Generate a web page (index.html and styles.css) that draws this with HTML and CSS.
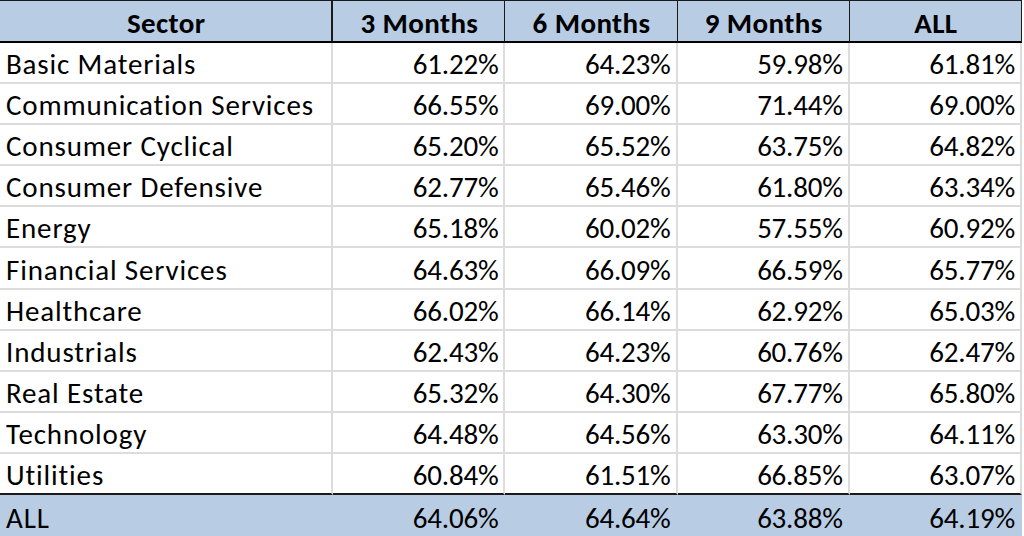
FILE: index.html
```html
<!DOCTYPE html>
<html>
<head>
<meta charset="utf-8">
<link rel="stylesheet" href="styles.css">
</head>
<body>
<table class="grid">
  <colgroup>
    <col class="c-sector"><col class="c-num"><col class="c-num"><col class="c-num"><col class="c-num">
  </colgroup>
  <thead>
    <tr class="head">
      <th>Sector</th><th>3 Months</th><th>6 Months</th><th>9 Months</th><th>ALL</th>
    </tr>
  </thead>
  <tbody>
    <tr><td>Basic Materials</td><td>61.22%</td><td>64.23%</td><td>59.98%</td><td>61.81%</td></tr>
    <tr><td>Communication Services</td><td>66.55%</td><td>69.00%</td><td>71.44%</td><td>69.00%</td></tr>
    <tr><td>Consumer Cyclical</td><td>65.20%</td><td>65.52%</td><td>63.75%</td><td>64.82%</td></tr>
    <tr><td>Consumer Defensive</td><td>62.77%</td><td>65.46%</td><td>61.80%</td><td>63.34%</td></tr>
    <tr><td>Energy</td><td>65.18%</td><td>60.02%</td><td>57.55%</td><td>60.92%</td></tr>
    <tr><td>Financial Services</td><td>64.63%</td><td>66.09%</td><td>66.59%</td><td>65.77%</td></tr>
    <tr><td>Healthcare</td><td>66.02%</td><td>66.14%</td><td>62.92%</td><td>65.03%</td></tr>
    <tr><td>Industrials</td><td>62.43%</td><td>64.23%</td><td>60.76%</td><td>62.47%</td></tr>
    <tr><td>Real Estate</td><td>65.32%</td><td>64.30%</td><td>67.77%</td><td>65.80%</td></tr>
    <tr><td>Technology</td><td>64.48%</td><td>64.56%</td><td>63.30%</td><td>64.11%</td></tr>
    <tr class="last"><td>Utilities</td><td>60.84%</td><td>61.51%</td><td>66.85%</td><td>63.07%</td></tr>
  </tbody>
  <tfoot>
    <tr class="total"><td>ALL</td><td>64.06%</td><td>64.64%</td><td>63.88%</td><td>64.19%</td></tr>
  </tfoot>
</table>
</body>
</html>
```

FILE: styles.css
```css
html, body {
  margin: 0;
  padding: 0;
  background: #ffffff;
}

body {
  width: 1024px;
  height: 536px;
  overflow: hidden;
  font-family: Carlito, Calibri, Lato, "Liberation Sans", sans-serif;
  color: #000000;
}

.grid {
  width: 1022px;
  table-layout: fixed;
  border-collapse: separate;
  border-spacing: 0;
  font-size: 29px;
  letter-spacing: -0.2px;
}

.c-sector { width: 333px; }
.c-num { width: 172px; }

.grid th,
.grid td {
  padding: 0 5px 0 6px;
  white-space: nowrap;
  overflow: hidden;
  box-sizing: border-box;
  line-height: 1;
}

.grid td:first-child {
  letter-spacing: 0.85px;
}

.head th {
  background: #b8cce4;
  font-weight: bold;
  text-align: center;
  letter-spacing: 0.4px;
  height: 43px;
  border-top: 1px solid #1a1a1a;
  border-bottom: 2px solid #000000;
  border-right: 1px solid #1a1a1a;
  padding-top: 5px;
}

.head th:first-child {
  border-right-width: 2px;
}

.grid tbody td {
  height: 41.1px;
  border-bottom: 2px solid #dcdcdc;
  border-right: 2px solid #dcdcdc;
  text-align: right;
  padding-top: 4px;
}

.grid tbody td:first-child,
.total td:first-child {
  text-align: left;
}

.grid tbody tr.last td {
  border-bottom: 2px solid #1a1a1a;
}

.total td {
  background: #b8cce4;
  height: 41px;
  text-align: right;
  border-right: 2px solid #b8cce4;
  padding-top: 6px;
}
```
